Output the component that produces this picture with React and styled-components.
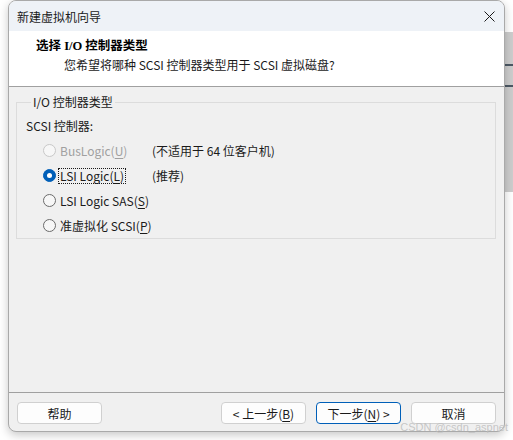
import React from "react";
import styled, { createGlobalStyle } from "styled-components";

const GlobalStyle = createGlobalStyle`
  body {
    margin: 0;
    background: #ffffff;
    font-family: "Noto Sans CJK SC", "Noto Sans", sans-serif;
    font-size: 12px;
    color: #1a1a1a;
  }
`;

const Page = styled.div`
  display: flex;
  width: 513px;
  height: 440px;
  padding-left: 8px;
  box-sizing: border-box;
  overflow: hidden;
  position: relative;
`;

const Backdrop = styled.div`
  flex: 1;
  display: flex;
  flex-direction: column;
  padding-top: 32px;
`;

const BackdropPanel = styled.div`
  height: 128px;
  background: #cdcdcd;
  display: flex;
  flex-direction: column;
  padding-top: 32px;
  gap: 19px;
`;

const BackdropLine = styled.div`
  height: 2px;
  background: #4c5864;
`;

const Window = styled.div`
  width: 497px;
  height: 432px;
  box-sizing: border-box;
  border: 1px solid #a9a9a9;
  border-radius: 8px;
  background: #f0f0f0;
  box-shadow: 0 3px 10px rgba(0, 0, 0, 0.22);
  display: flex;
  flex-direction: column;
  overflow: hidden;
  position: relative;
  z-index: 1;
`;

const TitleBar = styled.div`
  height: 30px;
  background: #eef2f7;
  display: flex;
  align-items: center;
  justify-content: space-between;
  padding: 0 9px 0 8px;
  font-size: 12px;
  color: #1a1a1a;
`;

const CloseButton = styled.div`
  width: 12px;
  height: 12px;
  display: flex;
  align-items: center;
  justify-content: center;
`;

const Header = styled.div`
  height: 56px;
  background: #ffffff;
  border-bottom: 1px solid #a0a0a0;
  padding-top: 7px;
  box-sizing: border-box;
`;

const HeaderTitle = styled.div`
  font-family: "Liberation Serif", "Noto Sans CJK SC", serif;
  font-weight: bold;
  font-size: 12.5px;
  line-height: 16px;
  padding-left: 27px;
  color: #000;
`;

const HeaderSub = styled.div`
  font-size: 12px;
  line-height: 16px;
  margin-top: 3px;
  padding-left: 55px;
  color: #1a1a1a;
`;

const Body = styled.div`
  flex: 1;
  padding: 7px 8px 0 7px;
`;

const Group = styled.fieldset`
  margin: 0;
  padding: 8px 0 0 9px;
  border: 1px solid #dcdcdc;
  min-width: 0;
`;

const Legend = styled.legend`
  margin-left: 5px;
  padding: 0 2px;
  font-size: 12px;
  line-height: 16px;
  color: #1a1a1a;
`;

const GroupLabel = styled.div`
  line-height: 16px;
  margin-bottom: 4px;
`;

const Options = styled.div`
  display: grid;
  grid-template-columns: 109px auto;
  grid-auto-rows: 25px;
  padding-left: 17px;
  align-items: center;
`;

const Option = styled.label`
  display: flex;
  align-items: center;
  gap: 2px;
  white-space: nowrap;
  color: ${(p) => (p.disabled ? "#a0a0a0" : "#1a1a1a")};
`;

const Radio = styled.span`
  width: 13px;
  height: 13px;
  border-radius: 50%;
  box-sizing: border-box;
  flex: none;
  display: flex;
  align-items: center;
  justify-content: center;
  background: ${(p) => (p.checked ? "#005fb8" : "#f7f7f7")};
  border: 1px solid
    ${(p) => (p.checked ? "#005fb8" : p.disabled ? "#c8c8c8" : "#6b6b6b")};

  &::after {
    content: "";
    display: ${(p) => (p.checked ? "block" : "none")};
    width: 5px;
    height: 5px;
    border-radius: 50%;
    background: #ffffff;
  }
`;

const OptionText = styled.span`
  line-height: 14px;
  padding: 0 1px;
  white-space: nowrap;
  border: 1px dotted ${(p) => (p.focused ? "#1a1a1a" : "transparent")};
`;

const Note = styled.span`
  color: #1a1a1a;
  white-space: nowrap;
`;

const Key = styled.u`
  text-decoration-thickness: 1px;
  text-underline-offset: 2px;
`;

const Footer = styled.div`
  height: 39px;
  border-top: 1px solid #a0a0a0;
  box-sizing: border-box;
  display: flex;
  align-items: flex-start;
  padding: 9px 8px 0 8px;
  gap: 10px;
`;

const Spacer = styled.div`
  flex: 1;
`;

const Button = styled.button`
  width: 85px;
  height: 22px;
  box-sizing: border-box;
  border-radius: 4px;
  background: #fdfdfd;
  border: 1px solid ${(p) => (p.primary ? "#005fb8" : "#d0d0d0")};
  font-family: "Noto Sans CJK SC", "Noto Sans", sans-serif;
  font-size: 12px;
  color: #1a1a1a;
  padding: 0;
  display: flex;
  align-items: center;
  justify-content: center;
  white-space: pre;
`;

const Watermark = styled.div`
  position: absolute;
  right: 5px;
  bottom: 7px;
  font-family: "Liberation Sans", sans-serif;
  font-size: 11px;
  color: rgba(190, 190, 190, 0.85);
  z-index: 2;
`;

const options = [
  { id: "bus", name: "BusLogic", key: "U", note: "(不适用于 64 位客户机)", disabled: true },
  { id: "lsi", name: "LSI Logic", key: "L", note: "(推荐)", checked: true },
  { id: "sas", name: "LSI Logic SAS", key: "S" },
  { id: "pv", name: "准虚拟化 SCSI", key: "P" },
];

const App = () => {
  return (
    <>
      <GlobalStyle />
      <Page>
        <Window>
          <TitleBar>
            <span>新建虚拟机向导</span>
            <CloseButton>
              <svg width="11" height="11" viewBox="0 0 11 11">
                <path d="M0.5 0.5 L10.5 10.5 M10.5 0.5 L0.5 10.5" stroke="#1a1a1a" strokeWidth="1" />
              </svg>
            </CloseButton>
          </TitleBar>
          <Header>
            <HeaderTitle>选择 I/O 控制器类型</HeaderTitle>
            <HeaderSub>您希望将哪种 SCSI 控制器类型用于 SCSI 虚拟磁盘?</HeaderSub>
          </Header>
          <Body>
            <Group>
              <Legend>I/O 控制器类型</Legend>
              <GroupLabel>SCSI 控制器:</GroupLabel>
              <Options>
                {options.map((o) => (
                  <React.Fragment key={o.id}>
                    <Option disabled={o.disabled}>
                      <Radio checked={o.checked} disabled={o.disabled} />
                      <OptionText focused={o.checked}>
                        {o.name}(<Key>{o.key}</Key>)
                      </OptionText>
                    </Option>
                    <Note>{o.note}</Note>
                  </React.Fragment>
                ))}
              </Options>
            </Group>
          </Body>
          <Footer>
            <Button>帮助</Button>
            <Spacer />
            <Button>
              &lt; 上一步(<Key>B</Key>)
            </Button>
            <Button primary>
              下一步(<Key>N</Key>) &gt;
            </Button>
            <Button>取消</Button>
          </Footer>
        </Window>
        <Backdrop>
          <BackdropPanel>
            <BackdropLine />
            <BackdropLine />
          </BackdropPanel>
        </Backdrop>
        <Watermark>CSDN @csdn_aspnet</Watermark>
      </Page>
    </>
  );
};

export default App;
